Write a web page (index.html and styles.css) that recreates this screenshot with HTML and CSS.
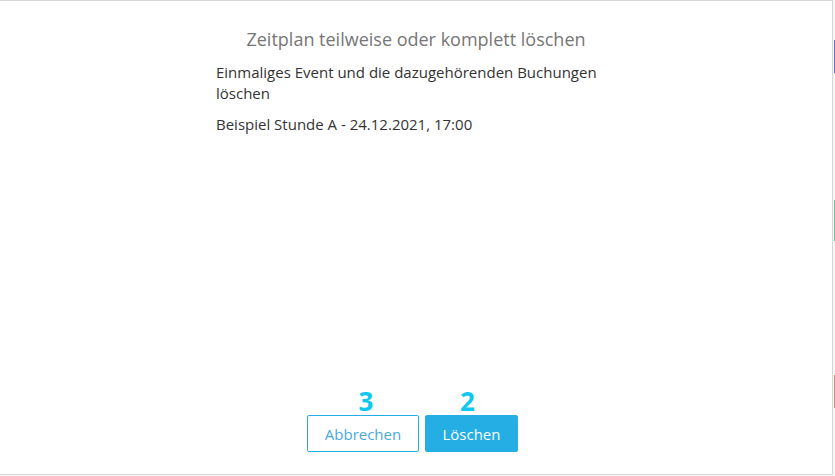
FILE: index.html
```html
<!DOCTYPE html>
<html lang="de">
<head>
    <meta charset="UTF-8">
    <title>Zeitplan löschen</title>
    <link rel="stylesheet" href="styles.css">
</head>
<body>
    <div class="page">
        <div class="modal">
            <h2 class="modal-title">Zeitplan teilweise oder komplett löschen</h2>
            <div class="modal-body">
                <p>Einmaliges Event und die dazugehörenden Buchungen löschen</p>
                <p>Beispiel Stunde A - 24.12.2021, 17:00</p>
            </div>
            <div class="modal-footer">
                <div class="btn-wrap">
                    <span class="marker marker-cancel">3</span>
                    <button class="btn btn-outline">Abbrechen</button>
                </div>
                <div class="btn-wrap">
                    <span class="marker marker-delete">2</span>
                    <button class="btn btn-primary">Löschen</button>
                </div>
            </div>
        </div>
        <div class="side">
            <span class="bar purple"></span>
            <span class="bar green"></span>
            <span class="bar brown"></span>
        </div>
    </div>
</body>
</html>
```

FILE: styles.css
```css
body {
    margin: 0;
    font-family: "Open Sans", "Liberation Sans", sans-serif;
    background: #f7f7f7;
    width: 835px;
    height: 476px;
    overflow: hidden;
}

.page {
    display: flex;
    height: 476px;
}

.modal {
    width: 832px;
    height: 473px;
    background: #fff;
    border-top: 1px solid #d6d6d6;
    border-right: 1px solid #d6d6d6;
    border-bottom: 1px solid #d6d6d6;
    display: flex;
    flex-direction: column;
    align-items: center;
}

.modal-title {
    margin: 25px 0 0;
    font-size: 18px;
    font-weight: 400;
    color: #767676;
    line-height: 26px;
}

.modal-body {
    width: 400px;
    margin-top: 10px;
    font-size: 15px;
    color: #333;
    line-height: 21px;
}

.modal-body p {
    margin: 0 0 10px;
}

.modal-footer {
    margin-top: auto;
    margin-bottom: 22px;
    margin-right: 7px;
    display: flex;
    gap: 6px;
}

.btn-wrap {
    display: flex;
    flex-direction: column;
    align-items: center;
}

.marker {
    font-size: 26px;
    font-weight: 700;
    color: #0fc8ef;
    line-height: 26px;
    margin-bottom: 1px;
}

.marker-cancel { margin-left: 6px; }
.marker-delete { margin-right: 8px; }

.btn {
    font-family: inherit;
    font-size: 15px;
    height: 37px;
    border-radius: 2px;
    cursor: pointer;
}

.btn-outline {
    width: 112px;
    background: #fff;
    color: #4aa9db;
    border: 1px solid #25aee3;
}

.btn-primary {
    width: 93px;
    background: #25aee3;
    color: #fff;
    border: 1px solid #25aee3;
}

.side {
    flex: 1;
    position: relative;
}

.bar {
    position: absolute;
    left: 1px;
    width: 2px;
}

.purple { top: 40px; height: 33px; background: #6f6cc4; }
.green { top: 200px; height: 41px; background: #6cbfa0; }
.brown { top: 375px; height: 33px; background: #c08f78; }
```
